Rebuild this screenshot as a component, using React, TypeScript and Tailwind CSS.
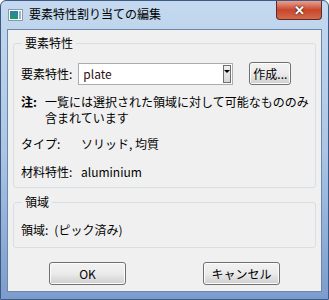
import { memo } from 'react'

const font = { fontFamily: '"Noto Sans CJK JP", "Liberation Sans", sans-serif' }

const WinButton = memo(function WinButton({ label, className = '' }: { label: string; className?: string }) {
  return (
    <button className={`h-[23px] rounded-[3px] border border-[#707070] bg-gradient-to-b from-[#f2f2f2] via-[#ebebeb] to-[#cfcfcf] text-[12px] leading-none text-black shadow-[inset_0_0_0_1px_#fcfcfc] ${className}`}>
      {label}
    </button>
  )
})

function GroupBox({ title, children, className = '' }: { title: string; children: React.ReactNode; className?: string }) {
  return (
    <div className={`relative mx-[5px] rounded-[3px] border border-[#d5dfe5] ${className}`}>
      <span className="absolute left-[8px] top-[-9px] bg-[#f0f0f0] px-[3px] text-[12px] leading-[16px]">{title}</span>
      {children}
    </div>
  )
}

export default function App() {
  return (
    <div style={font} className="flex h-[300px] w-[329px] flex-col rounded-t-[6px] border border-[#3c5a82] bg-gradient-to-b from-[#c4d9ef] via-[#abc6e5] to-[#7b9ccd] text-[12px] text-black">
      <div className="flex h-[28px] items-start">
        <div className="ml-[7px] mt-[8px] flex h-[12px] w-[15px] border border-[#8a9aa8] bg-white p-[1px]">
          <div className="w-[8px] bg-gradient-to-b from-[#2f7fa8] to-[#1d9a6a]" />
          <div className="ml-[1px] flex-1 bg-[#9ab4c8]" />
        </div>
        <span className="ml-[6px] mt-[5px] text-[12px] leading-[16px]">要素特性割り当ての編集</span>
        <div className="ml-auto mr-[6px] flex h-[19px] w-[46px] items-center justify-center rounded-b-[4px] border border-t-0 border-[#5c2a2a] bg-gradient-to-b from-[#e8a08e] via-[#c8452c] to-[#d56a4a] text-[13px] font-bold text-white" style={{ textShadow: '0 0 2px #000' }}>
          ✕
        </div>
      </div>
      <div className="mx-[6px] mb-[7px] flex flex-1 flex-col border border-[#6e87a8] bg-[#f0f0f0]">
        <GroupBox title="要素特性" className="mt-[13px] h-[145px] px-[7px] pt-[18px]">
          <div className="flex items-center">
            <span>要素特性:</span>
            <div className="ml-[6px] flex h-[22px] w-[155px] items-center border border-[#abadb3] bg-white">
              <span className="flex-1 pl-[4px] text-[#2b0f0f]">plate</span>
              <div className="mr-[1px] flex h-[18px] w-[8px] items-start justify-center border border-[#707070] bg-gradient-to-b from-[#f0f0f0] to-[#d8d8d8] pt-[4px]">
                <div className="h-0 w-0 border-x-[3px] border-t-[3px] border-x-transparent border-t-black" />
              </div>
            </div>
            <WinButton label="作成..." className="ml-[16px] w-[42px]" />
          </div>
          <div className="mt-[9px] flex leading-[16px]">
            <span className="w-[24px] shrink-0 font-bold">注:</span>
            <span className="whitespace-nowrap">
              一覧には選択された領域に対して可能なもののみ
              <br />
              含まれています
            </span>
          </div>
          <div className="mt-[9px] flex">
            <span className="w-[60px]">タイプ:</span>
            <span>ソリッド, 均質</span>
          </div>
          <div className="mt-[10px] flex">
            <span className="w-[60px]">材料特性:</span>
            <span>aluminium</span>
          </div>
        </GroupBox>
        <GroupBox title="領域" className="mt-[14px] h-[46px] px-[7px] pt-[18px]">
          <div className="flex">
            <span>領域:</span>
            <span className="ml-[6px]">(ピック済み)</span>
          </div>
        </GroupBox>
        <div className="mt-[14px] flex">
          <WinButton label="OK" className="ml-[41px] w-[77px]" />
          <WinButton label="キャンセル" className="ml-[77px] w-[77px]" />
        </div>
      </div>
    </div>
  )
}
